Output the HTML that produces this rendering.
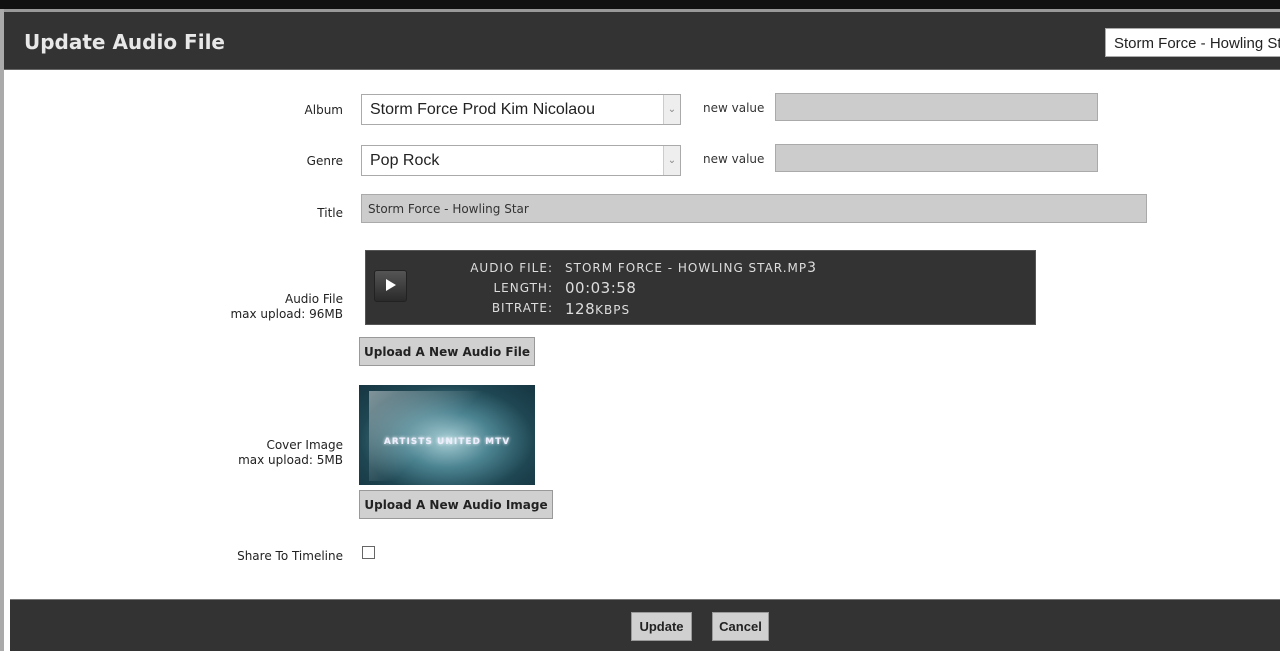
<!DOCTYPE html>
<html><head><style>
*{margin:0;padding:0;box-sizing:border-box}
body{width:1280px;height:651px;overflow:hidden;background:#fff;position:relative;font-family:"DejaVu Sans",Verdana,sans-serif;color:#222}
.a{position:absolute}
.lbl{position:absolute;font-size:12px;text-align:right;width:200px;line-height:15px}
.sel{position:absolute;border:1px solid #aaa;background:#fff;font-family:"Liberation Sans",sans-serif;font-size:16px;padding-left:8px;line-height:30px;height:31px;width:320px}
.sel .ar{position:absolute;right:0;top:0;width:17px;height:29px;background:#eee;border-left:1px solid #ccc;color:#888;font-size:10px;text-align:center;line-height:29px}
.nv{position:absolute;font-size:12px;color:#333}
.gin{position:absolute;background:#ccc;border:1px solid #aaa}
.btn{position:absolute;background:#d0d0d0;border:1px solid #999;font-weight:bold;font-size:12px;text-align:center;color:#222}
</style></head><body>
<div class="a" style="left:0;top:0;width:1280px;height:9px;background:#111"></div>
<div class="a" style="left:0;top:9px;width:1280px;height:3px;background:#999"></div>
<div class="a" style="left:0;top:9px;width:4px;height:642px;background:#aaa"></div>
<div class="a" style="left:4px;top:12px;width:1276px;height:58px;background:#333;border-bottom:1px solid #666"></div>
<div class="a" style="left:24px;top:30px;font-family:'DejaVu Sans',sans-serif;font-weight:bold;font-size:20px;color:#e8e8e8">Update Audio File</div>
<div class="a" style="left:1105px;top:28px;width:180px;height:29px;background:#fff;border:1px solid #aaa;font-family:'Liberation Sans',sans-serif;font-size:15px;line-height:29px;padding-left:8px;color:#222;white-space:nowrap;overflow:hidden">Storm Force - Howling Star</div>

<div class="lbl" style="left:143px;top:103px">Album</div>
<div class="sel" style="left:361px;top:94px">Storm Force Prod Kim Nicolaou<div class="ar">&#8964;</div></div>
<div class="nv" style="left:703px;top:101px">new value</div>
<div class="gin" style="left:775px;top:93px;width:323px;height:28px"></div>

<div class="lbl" style="left:143px;top:154px">Genre</div>
<div class="sel" style="left:361px;top:145px">Pop Rock<div class="ar">&#8964;</div></div>
<div class="nv" style="left:703px;top:152px">new value</div>
<div class="gin" style="left:775px;top:144px;width:323px;height:28px"></div>

<div class="lbl" style="left:143px;top:206px">Title</div>
<div class="gin" style="left:361px;top:194px;width:786px;height:29px;font-family:'DejaVu Sans',sans-serif;font-size:12px;line-height:29px;padding-left:6px;color:#333">Storm Force - Howling Star</div>

<div class="a" style="left:365px;top:250px;width:671px;height:75px;background:#333;border:1px solid #555"></div>
<div class="a" style="left:374px;top:270px;width:33px;height:32px;background:linear-gradient(#555,#2a2a2a);border:1px solid #222;border-radius:3px"></div>
<div class="a" style="left:386px;top:279px;width:0;height:0;border-left:10px solid #fff;border-top:6px solid transparent;border-bottom:6px solid transparent"></div>
<div class="a" style="left:400px;top:258px;width:153px;text-align:right;color:#ddd;font-size:12px;letter-spacing:1px;line-height:20px">AUDIO FILE:<br>LENGTH:<br>BITRATE:</div>
<div class="a" style="left:565px;top:258px;color:#ddd;font-size:12px;letter-spacing:1px;line-height:20px;white-space:nowrap">STORM FORCE - HOWLING STAR.MP<span style="font-size:14px">3</span><br><span style="font-size:15px;letter-spacing:.5px">00:03:58</span><br><span style="font-size:15px;letter-spacing:.5px">128</span>KBPS</div>

<div class="lbl" style="left:143px;top:292px">Audio File<br>max upload: 96MB</div>
<div class="btn" style="left:359px;top:337px;width:176px;height:29px;line-height:28px">Upload A New Audio File</div>

<div class="a" style="left:359px;top:385px;width:176px;height:100px;background:radial-gradient(ellipse at 50% 55%,#a9cfd6 0%,#4d8592 35%,#1e4652 70%,#163542 100%);overflow:hidden">
<div class="a" style="left:10px;top:6px;width:120px;height:90px;background:linear-gradient(135deg,rgba(255,255,255,.45),rgba(255,255,255,0) 55%)"></div>
<div class="a" style="left:0;top:52px;width:176px;text-align:center;color:#eef;font-weight:bold;font-size:9px;letter-spacing:1px;text-shadow:0 0 3px #fff">ARTISTS UNITED MTV</div>
</div>
<div class="lbl" style="left:143px;top:438px">Cover Image<br>max upload: 5MB</div>
<div class="btn" style="left:359px;top:490px;width:194px;height:29px;line-height:28px">Upload A New Audio Image</div>

<div class="lbl" style="left:143px;top:549px">Share To Timeline</div>
<div class="a" style="left:362px;top:546px;width:13px;height:13px;border:1px solid #666;background:#fff"></div>

<div class="a" style="left:10px;top:599px;width:1270px;height:52px;background:#333;border-top:1px solid #777"></div>
<div class="btn" style="left:631px;top:612px;width:61px;height:29px;line-height:28px;font-family:'Liberation Sans Narrow','Liberation Sans',sans-serif;font-size:13px">Update</div>
<div class="btn" style="left:712px;top:612px;width:57px;height:29px;line-height:28px;font-family:'Liberation Sans Narrow','Liberation Sans',sans-serif;font-size:13px">Cancel</div>
</body></html>
